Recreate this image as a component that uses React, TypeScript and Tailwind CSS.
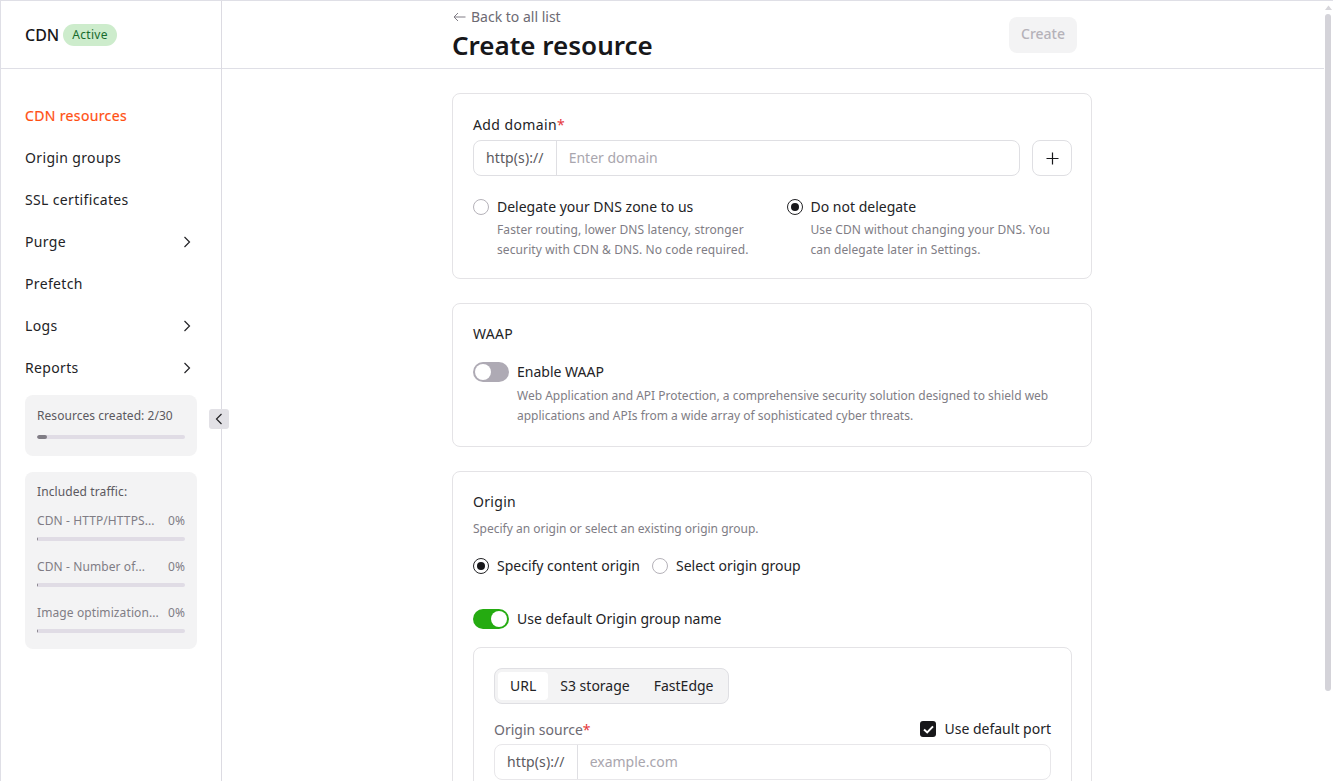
import React from "react";

const Chevron = ({ dir = "right", className = "" }: { dir?: "right" | "left"; className?: string }) => (
  <svg width="12" height="12" viewBox="0 0 12 12" fill="none" className={className}>
    <path d={dir === "right" ? "M3.5 1L8.5 6L3.5 11" : "M8.5 1L3.5 6L8.5 11"} stroke="#232326" strokeWidth="1.2" />
  </svg>
);

const Radio = ({ on = false }: { on?: boolean }) => (
  <span className={`flex h-4 w-4 shrink-0 items-center justify-center rounded-full border bg-white ${on ? "border-[#232326]" : "border-[#b5b2b9]"}`}>
    {on && <span className="h-2 w-2 rounded-full bg-[#17171a]" />}
  </span>
);

const Toggle = ({ on = false }: { on?: boolean }) => (
  <span className={`flex h-5 w-9 shrink-0 rounded-full p-0.5 ${on ? "justify-end bg-[#25ab11]" : "justify-start bg-[#aeaab4]"}`}>
    <span className="h-4 w-4 rounded-full bg-white" />
  </span>
);

const Bar = ({ pct }: { pct: number }) => (
  <div className="h-1 w-full overflow-hidden rounded-sm bg-[#e0dce5]">
    <div className="h-full rounded-sm bg-[#807d85]" style={{ width: `${pct}%` }} />
  </div>
);

const nav: [string, boolean][] = [
  ["Origin groups", false],
  ["SSL certificates", false],
  ["Purge", true],
  ["Prefetch", false],
  ["Logs", true],
  ["Reports", true],
];

const traffic = ["CDN - HTTP/HTTPS...", "CDN - Number of...", "Image optimization..."];

const card = "rounded-lg border border-[#e4e3e6] bg-white p-5";

export default function App() {
  return (
    <div className="relative flex h-[781px] overflow-hidden border-l border-t border-[#dfdfe6] bg-white text-[14px] text-[#232326] [font-family:'Noto_Sans',sans-serif]">
      <aside className="relative flex w-[221px] shrink-0 flex-col border-r border-[#dcdbe2]">
        <div className="flex h-[68px] shrink-0 items-center gap-1 border-b border-[#dfdfe6] pl-6">
          <span className="text-[16px] font-medium leading-6 text-[#17171a]">CDN</span>
          <span className="rounded-full bg-[#cdeccc] px-[9px] text-[12px] leading-[22px] tracking-[0.3px] text-[#176b2c]">Active</span>
        </div>
        <nav className="flex flex-col pt-[25px] tracking-[0.35px]">
          <div className="flex h-[42px] items-center pl-6 text-[#ff4f12] [-webkit-text-stroke:0.2px_#ff4f12]">CDN resources</div>
          {nav.map(([label, arrow]) => (
            <div key={label} className="flex h-[42px] items-center justify-between pl-6 pr-[28px]">
              <span>{label}</span>
              {arrow && <Chevron className="translate-y-px" />}
            </div>
          ))}
        </nav>
        <div className="mx-6 mt-[7px] rounded-lg bg-[#f3f3f4] px-3 py-[11px] text-[12px] leading-5 tracking-[0.05px] text-[#5b5960]">
          <div className="mb-[9px]">Resources created: 2/30</div>
          <Bar pct={6.7} />
          <div className="h-[6px]" />
        </div>
        <div className="mx-6 mt-4 rounded-lg bg-[#f3f3f4] px-3 pb-[16px] pt-[10px] text-[12px] leading-5 tracking-[0.1px]">
          <div className="mb-[9px] text-[#5b5960]">Included traffic:</div>
          <div className="flex flex-col gap-[16px]">
            {traffic.map((t) => (
              <div key={t}>
                <div className="mb-[6px] flex justify-between text-[#807d85]">
                  <span>{t}</span>
                  <span>0%</span>
                </div>
                <Bar pct={0.8} />
              </div>
            ))}
          </div>
        </div>
        <button className="absolute left-[208px] top-[408px] flex h-5 w-5 items-center justify-center rounded-[3px] bg-[#e2e1e6]">
          <Chevron dir="left" />
        </button>
      </aside>

      <main className="flex min-w-0 flex-1 flex-col pr-[9px]">
        <header className="h-[68px] shrink-0 border-b border-[#dfdfe6]">
          <div className="ml-[230px] flex w-[640px] items-start justify-between">
            <div className="pt-[6px]">
              <div className="ml-px flex items-center gap-[5px] text-[#6d6a73]">
                <svg width="13" height="10" viewBox="0 0 13 10" fill="none">
                  <path d="M5 1L1 5L5 9M1 5H12.5" stroke="#807d85" strokeWidth="1" />
                </svg>
                <span className="leading-5">Back to all list</span>
              </div>
              <h1 className="text-[26px] font-semibold leading-9 text-[#17171a]">Create resource</h1>
            </div>
            <button className="mr-[15px] mt-4 h-9 rounded-lg bg-[#f3f3f4] px-3 pb-1 font-medium text-[#b5b2b9]">Create</button>
          </div>
        </header>

        <div className="ml-[230px] flex w-[640px] flex-col gap-6 pt-6">
          <section className={`${card} pb-[18px] pr-[19px]`}>
            <div className="mb-[5px] mt-px leading-5 tracking-[0.4px]">
              Add domain
              <span className="text-[#e5383b]">*</span>
            </div>
            <div className="flex gap-3">
              <div className="flex h-9 flex-1 items-center rounded-lg border border-[#dfdfe3] leading-5">
                <span className="flex h-full items-center border-r border-[#dfdfe3] px-3 tracking-[0.1px] text-[#5b5960]">http(s)://</span>
                <span className="px-3 text-[#a9a6ae]">Enter domain</span>
              </div>
              <button className="flex h-9 w-10 items-center justify-center rounded-lg border border-[#dfdfe3]">
                <svg width="13" height="13" viewBox="0 0 13 13" fill="none">
                  <path d="M6.5 0.5V12.5M0.5 6.5H12.5" stroke="#17171a" strokeWidth="1.2" />
                </svg>
              </button>
            </div>
            <div className="mt-[23px] grid grid-cols-2 gap-x-[28px]">
              <div className="flex gap-2">
                <Radio />
                <div className="-mt-0.5">
                  <div className="leading-5">Delegate your DNS zone to us</div>
                  <p className="mt-[3px] text-[12px] leading-5 tracking-[0.1px] text-[#807d85]">Faster routing, lower DNS latency, stronger security with CDN &amp; DNS. No code required.</p>
                </div>
              </div>
              <div className="flex gap-2">
                <Radio on />
                <div className="-mt-0.5">
                  <div className="leading-5">Do not delegate</div>
                  <p className="mt-[3px] max-w-[250px] text-[12px] leading-5 tracking-[0.1px] text-[#807d85]">Use CDN without changing your DNS. You can delegate later in Settings.</p>
                </div>
              </div>
            </div>
          </section>

          <section className={card}>
            <div className="leading-5 tracking-[0.3px]">WAAP</div>
            <div className="mt-[18px] flex gap-2">
              <Toggle />
              <div>
                <div className="leading-5">Enable WAAP</div>
                <p className="mt-1 text-[12px] leading-5 text-[#807d85]">Web Application and API Protection, a comprehensive security solution designed to shield web applications and APIs from a wide array of sophisticated cyber threats.</p>
              </div>
            </div>
          </section>

          <section className={`${card} pr-[19px]`}>
            <div className="leading-5 tracking-[0.3px]">Origin</div>
            <p className="mt-[7px] text-[12px] leading-5 text-[#807d85]">Specify an origin or select an existing origin group.</p>
            <div className="mt-[17px] flex items-center gap-3">
              <div className="flex items-center gap-2">
                <Radio on />
                <span className="leading-5">Specify content origin</span>
              </div>
              <div className="flex items-center gap-2">
                <Radio />
                <span className="leading-5">Select origin group</span>
              </div>
            </div>
            <div className="mt-[33px] flex items-center gap-2">
              <Toggle on />
              <span className="leading-5">Use default Origin group name</span>
            </div>
            <div className="mt-[18px] rounded-lg border border-[#e4e3e6] p-5">
              <div className="inline-flex h-9 items-center rounded-lg border border-[#dfdfe3] bg-[#f3f3f4] p-[3px] pb-1 pr-[2px]">
                <span className="flex h-[28px] items-center rounded bg-white px-3">URL</span>
                <span className="flex h-[28px] items-center px-3">S3 storage</span>
                <span className="flex h-[28px] items-center px-3">FastEdge</span>
              </div>
              <div className="mt-4 flex items-center justify-between">
                <div className="leading-5 text-[#6d6a73]">
                  Origin source<span className="text-[#e5383b]">*</span>
                </div>
                <label className="-translate-y-px flex items-center gap-2">
                  <span className="flex h-4 w-4 items-center justify-center rounded-[3px] bg-[#17171a]">
                    <svg width="11" height="9" viewBox="0 0 11 9" fill="none">
                      <path d="M1 4.5L4.2 7.4L10 1.4" stroke="#fff" strokeWidth="2" />
                    </svg>
                  </span>
                  <span className="leading-5">Use default port</span>
                </label>
              </div>
              <div className="mt-1 flex h-9 items-center rounded-lg border border-[#e8e7ea] leading-5">
                <span className="flex h-full items-center border-r border-[#dfdfe3] px-3 tracking-[0.1px] text-[#5b5960]">http(s)://</span>
                <span className="px-3 text-[#a9a6ae]">example.com</span>
              </div>
            </div>
          </section>
        </div>
      </main>

      <div className="absolute bottom-0 right-0 top-0 w-[9px] bg-white">
        <svg width="9" height="8" viewBox="0 0 9 8" className="mt-[3px]">
          <path d="M4.5 1.5L8 6H1Z" fill="#d6d5da" />
        </svg>
        <div className="ml-[1px] mt-[2px] h-[677px] w-[6px] rounded-sm bg-[#d4d3d9]" />
      </div>
    </div>
  );
}
